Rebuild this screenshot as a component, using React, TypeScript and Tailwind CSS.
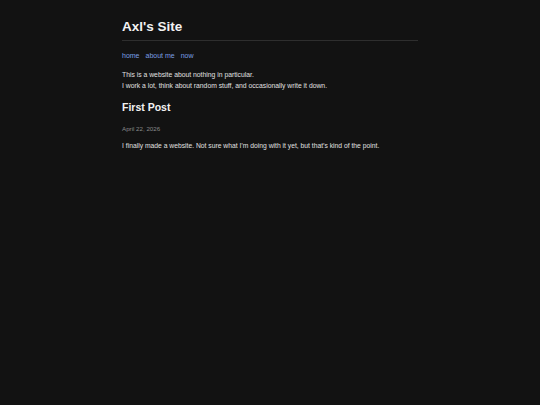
export default function App() {
  return (
    <div className="min-h-[405px] w-full bg-[#121212] text-[#dddddd]" style={{ fontFamily: '"Liberation Sans", Arial, sans-serif' }}>
      <div className="mx-auto w-[296px] pt-[19px]">
        <header className="border-b border-[#2e2e2e] pb-[5px]">
          <h1 className="text-[13.5px] font-bold leading-[16px] text-[#f2f2f2]">Axl's Site</h1>
        </header>
        <nav className="mt-[9px] flex gap-[6px] text-[7px] leading-[11px]">
          <a className="text-[#7a9fe4]" href="#">home</a>
          <a className="text-[#7a9fe4]" href="#">about me</a>
          <a className="text-[#7a9fe4]" href="#">now</a>
        </nav>
        <div className="mt-[8px] text-[6.8px] leading-[11px] text-[#e0e0e0]">
          <p>This is a website about nothing in particular.</p>
          <p>I work a lot, think about random stuff, and occasionally write it down.</p>
        </div>
        <h2 className="mt-[10px] text-[10.5px] font-bold leading-[13px] text-[#f2f2f2]">First Post</h2>
        <div className="mt-[10px] text-[6.2px] leading-[10px] text-[#8a8a8a]">April 22, 2026</div>
        <p className="mt-[5.5px] text-[6.75px] leading-[11px] text-[#e0e0e0]">I finally made a website. Not sure what I’m doing with it yet, but that’s kind of the point.</p>
      </div>
    </div>
  );
}
